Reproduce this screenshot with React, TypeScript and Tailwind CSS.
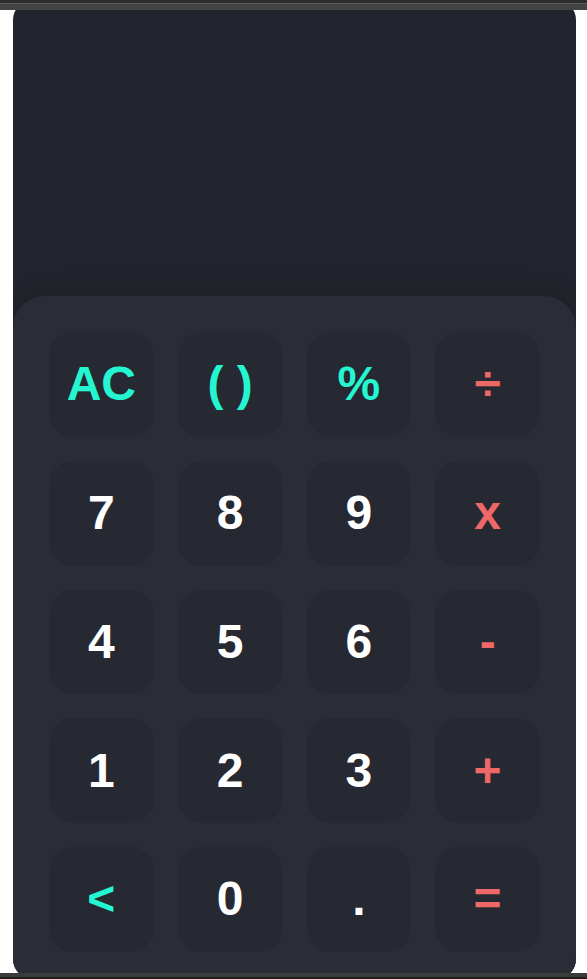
import React from "react";

type Key = { label: string; tone: "fn" | "op" | "num" };

const keys: Key[] = [
  { label: "AC", tone: "fn" },
  { label: "( )", tone: "fn" },
  { label: "%", tone: "fn" },
  { label: "÷", tone: "op" },
  { label: "7", tone: "num" },
  { label: "8", tone: "num" },
  { label: "9", tone: "num" },
  { label: "x", tone: "op" },
  { label: "4", tone: "num" },
  { label: "5", tone: "num" },
  { label: "6", tone: "num" },
  { label: "-", tone: "op" },
  { label: "1", tone: "num" },
  { label: "2", tone: "num" },
  { label: "3", tone: "num" },
  { label: "+", tone: "op" },
  { label: "<", tone: "fn" },
  { label: "0", tone: "num" },
  { label: ".", tone: "num" },
  { label: "=", tone: "op" },
];

const toneClass = {
  fn: "text-[#24f6d2]",
  op: "text-[#ee6868]",
  num: "text-white",
};

export default function App() {
  return (
    <div className="relative h-[979px] overflow-hidden bg-white font-['Liberation_Sans',Arial,sans-serif]">
      {/* window frame bars */}
      <div className="fixed inset-x-0 top-0 z-10 flex h-[10px] flex-col">
        <div className="h-[3px] bg-[#2c2c2c]" />
        <div className="h-px bg-[#5c5c5c]" />
        <div className="flex-1 bg-[#434343]" />
      </div>
      <div className="fixed inset-x-0 bottom-0 z-10 flex h-[6px] flex-col">
        <div className="flex-1 bg-[#3b3b3b]" />
        <div className="h-[2px] bg-[#1f1f1f]" />
      </div>

      <div className="ml-[13px] flex h-[979px] w-[563px] flex-col overflow-hidden rounded-[20px] bg-[#22252d]">
        <div className="h-[296px] shrink-0" />
        <div className="flex-1 rounded-t-[32px] bg-[#2a2d36] px-9 pt-9 shadow-[0_-8px_24px_rgba(0,0,0,0.12)]">
          <div className="grid grid-cols-4 gap-6">
            {keys.map((k) => (
              <button
                key={k.label}
                className={`flex aspect-square items-center justify-center rounded-3xl bg-[#262832] text-5xl font-bold ${toneClass[k.tone]}`}
              >
                {k.label}
              </button>
            ))}
          </div>
        </div>
      </div>
    </div>
  );
}
